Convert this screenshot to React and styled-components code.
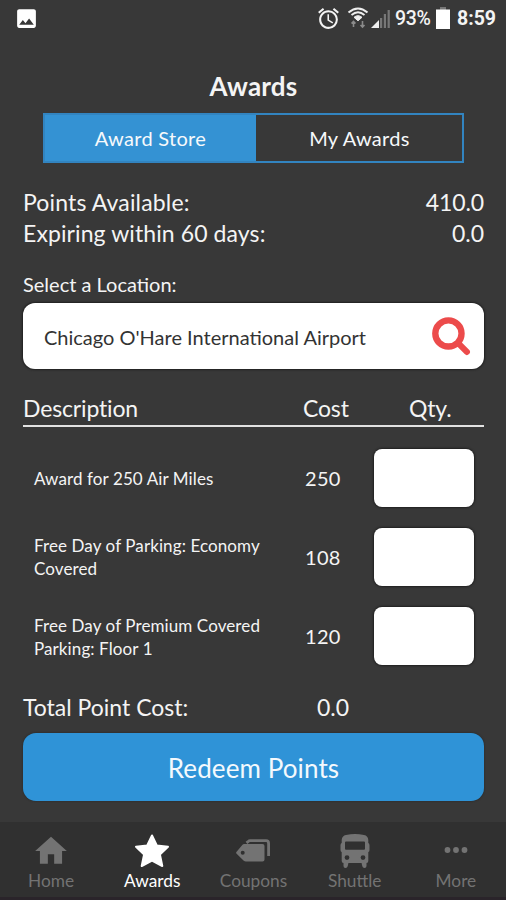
import styled, { createGlobalStyle } from "styled-components";
import { MdAlarm, MdHome, MdImage } from "react-icons/md";

const GlobalStyle = createGlobalStyle`
  * {
    box-sizing: border-box;
  }
  body {
    margin: 0;
    background-color: #383838;
  }
`;

const Screen = styled.div`
  width: 506px;
  height: 900px;
  display: flex;
  flex-direction: column;
  overflow: hidden;
  background-color: #383838;
  color: #f4f4f4;
  font-family: Lato, "Open Sans", sans-serif;
`;

const StatusBar = styled.div`
  height: 38px;
  padding: 0 11px 0 14px;
  display: flex;
  align-items: center;
  flex-shrink: 0;
  font-family: Roboto, sans-serif;

  > svg {
    margin-bottom: 2px;
  }
`;

const StatusIcons = styled.div`
  margin-left: auto;
  display: flex;
  align-items: center;
`;

const StatusIcon = styled.span`
  height: 25px;
  margin-right: ${(props) => props.$gap}px;
  padding-bottom: 2px;
  display: flex;
  align-items: center;
`;

const StatusText = styled.span`
  width: ${(props) => props.$width}px;
  font-size: 19.5px;
  line-height: 38px;
  font-weight: ${(props) => (props.$bold ? 700 : 500)};
  letter-spacing: ${(props) => props.$spacing || 0}px;
  white-space: nowrap;
`;

const Content = styled.main`
  flex: 1;
  padding: 29px 22px 0 23px;
  display: flex;
  flex-direction: column;
`;

const Title = styled.h1`
  margin: 0;
  height: 46px;
  line-height: 38px;
  text-align: center;
  font-size: 26px;
  font-weight: 700;
  letter-spacing: 0.2px;
`;

const Tabs = styled.div`
  margin: 0 20px;
  height: 50px;
  display: grid;
  grid-template-columns: 211px 1fr;
  border: 2px solid #3284c0;
`;

const Tab = styled.button`
  padding: 0 0 0 ${(props) => (props.$active ? 0 : 1)}px;
  border: none;
  background-color: ${(props) => (props.$active ? "#3492d3" : "transparent")};
  color: #f6f9fb;
  font-family: inherit;
  font-size: 20px;
  letter-spacing: 0.3px;
`;

const Summary = styled.div`
  margin-top: 24px;
`;

const SummaryRow = styled.div`
  height: 31px;
  display: flex;
  justify-content: space-between;
  font-size: 23px;
  line-height: 31px;
`;

const SummaryText = styled.span`
  letter-spacing: ${(props) => props.$spacing || 0}px;
`;

const Label = styled.label`
  margin-top: 23px;
  height: 31px;
  font-size: 20px;
  line-height: 25px;
`;

const SearchBox = styled.div`
  height: 66px;
  padding: 0 12px 0 21px;
  display: flex;
  align-items: center;
  justify-content: space-between;
  border-radius: 12px;
  background-color: #fff;
  color: #333;
  font-size: 20px;
  line-height: 26px;
  box-shadow: 0 0 2px 1px #202020;

  span {
    padding-top: 2px;
  }
`;

const TableHead = styled.div`
  margin-top: 22px;
  height: 36px;
  display: grid;
  grid-template-columns: 280px 106px 1fr;
  border-bottom: 2px solid #e2e2e2;
  font-size: 23px;
  line-height: 34px;
  letter-spacing: -0.15px;
`;

const AwardRow = styled.div`
  height: 59px;
  margin-top: ${(props) => (props.$first ? 21 : 20.3)}px;
  padding: 0 10px 0 11px;
  display: grid;
  grid-template-columns: 271px 1fr 100px;
  align-items: center;
`;

const AwardName = styled.span`
  padding-top: 1px;
  font-size: 17px;
  line-height: 23px;
  letter-spacing: 0.1px;
  white-space: pre-line;
`;

const AwardCost = styled.span`
  font-size: 20px;
  letter-spacing: 0.3px;
`;

const QtyInput = styled.input`
  width: 100px;
  height: 58px;
  border: none;
  border-radius: 8px;
  background-color: #fff;
  box-shadow: 0 0 2px 1px #202020;
`;

const Total = styled.div`
  margin-top: 25px;
  height: 42px;
  display: grid;
  grid-template-columns: 294px 1fr;
  font-size: 23px;
  line-height: 33px;
`;

const RedeemBtn = styled.button`
  height: 68px;
  padding: 3px 0 0;
  border: none;
  border-radius: 13px;
  background-color: #2f93d7;
  color: #f4f9fd;
  font-family: inherit;
  font-size: 26px;
  letter-spacing: 0.1px;
  box-shadow: 0 0 2px #222;
`;

const NavBar = styled.nav`
  height: 78px;
  flex-shrink: 0;
  display: grid;
  grid-template-columns: repeat(5, 1fr);
  background-color: #303030;
  border-bottom: 3px solid #2a242a;
`;

const NavItem = styled.a`
  padding: 9px 0 0 1px;
  display: flex;
  flex-direction: column;
  align-items: center;
  color: ${(props) => (props.$active ? "#fff" : "#737373")};
  font-size: 17.3px;
  line-height: 19px;
`;

const NavIcon = styled.span`
  height: 40px;
  display: flex;
  align-items: center;
`;

const WifiIcon = () => (
  <svg width="22" height="22" viewBox="0 0 22 22" fill="none" stroke="#eee">
    <path d="M1.5 5.5Q11 -2.5 20.5 5.5" strokeWidth="2" />
    <path d="M4.5 8Q11 2.5 17.5 8" strokeWidth="1.8" />
    <path d="M7 10.3Q11 7 15 10.3L11 13.8Z" fill="#eee" strokeWidth="1" />
    <path d="M6.5 20v-5M4.5 16.5l2-2 2 2M15.5 14v6M13.5 18l2 2 2-2" stroke="#8b8b8b" strokeWidth="1.6" />
  </svg>
);

const SignalIcon = () => (
  <svg width="20" height="20" viewBox="0 0 20 20">
    <path d="M0 20L8 12V20Z" fill="#eee" />
    <path d="M9 10h2.2v10H9zM12.8 6H15v14h-2.2zM16.6 2h2.2v18h-2.2z" fill="#777" />
  </svg>
);

const BatteryIcon = () => (
  <svg width="14" height="22" viewBox="0 0 14 22">
    <path d="M4 0h6v3H4z" fill="#777" />
    <path d="M0 2.5h14V22H0z" fill="#fff" />
  </svg>
);

const SearchIcon = () => (
  <svg width="41" height="41" viewBox="0 0 40 40" fill="none" stroke="#ec4b4b">
    <circle cx="17" cy="17" r="12.8" strokeWidth="6.2" />
    <path d="M26.5 26.5L35 35" strokeWidth="6" strokeLinecap="round" />
  </svg>
);

const StarIcon = () => (
  <svg width="36" height="36" viewBox="0 0 36 36">
    <path
      d="M18 2.5L22.8 12.4L34 13.8L25.9 21.4L28.3 33L18 27.6L7.7 33L10.1 21.4L2 13.8L13.2 12.4Z"
      fill="currentColor"
      stroke="currentColor"
      strokeWidth="2"
      strokeLinejoin="round"
    />
  </svg>
);

const TagsIcon = () => (
  <svg width="36" height="24" viewBox="0 0 36 24">
    <path
      d="M9.2 5H27.5Q29.5 5 29.5 7V20.5Q29.5 22.5 27.5 22.5H11Q9.7 22.5 8.5 21.4L1.6 14.8Q.6 13.8 1.6 12.8L7.3 6Q8.1 5 9.2 5ZM7.7 11.8A2 2 0 1 0 7.7 15.8A2 2 0 1 0 7.7 11.8Z"
      fill="currentColor"
      fillRule="evenodd"
    />
    <path
      d="M11.5 3.9L13.5 2.2Q14 1.7 15 1.7H31Q33.6 1.7 33.6 4.5V17"
      fill="none"
      stroke="currentColor"
      strokeWidth="2.8"
    />
  </svg>
);

const BusIcon = () => (
  <svg width="30" height="34" viewBox="0 0 30 34">
    <path
      d="M6 1Q15-1 24 1Q28 1.8 28.3 6V9Q29.7 9.5 29.5 12V16Q29.4 18 28.3 18V27Q28.3 29 26.5 29V32Q26.5 34 24.5 34Q22.5 34 22 31L21.6 29H8.4L8 31Q7.5 34 5.5 34Q3.5 34 3.5 32V29Q1.7 29 1.7 27V18Q.6 18 .5 16V12Q.3 9.5 1.7 9V6Q2 1.8 6 1ZM6 7.4Q5 7.4 5 8.4V14.7Q5 15.7 6 15.7H24Q25 15.7 25 14.7V8.4Q25 7.4 24 7.4ZM7 21.2A2.4 2.4 0 1 0 7 26A2.4 2.4 0 1 0 7 21.2ZM23 21.2A2.4 2.4 0 1 0 23 26A2.4 2.4 0 1 0 23 21.2Z"
      fill="currentColor"
      fillRule="evenodd"
    />
  </svg>
);

const MoreIcon = () => (
  <svg width="24" height="10" viewBox="0 0 24 10" fill="currentColor">
    <circle cx="3.5" cy="4" r="2.9" />
    <circle cx="12" cy="4" r="2.9" />
    <circle cx="20.5" cy="4" r="2.9" />
  </svg>
);

const awards = [
  { name: "Award for 250 Air Miles", cost: 250 },
  { name: "Free Day of Parking: Economy\nCovered", cost: 108 },
  { name: "Free Day of Premium Covered\nParking: Floor 1", cost: 120 },
];

const navItems = [
  { name: "Home", icon: <MdHome size={38} /> },
  { name: "Awards", icon: <StarIcon />, active: true },
  { name: "Coupons", icon: <TagsIcon /> },
  { name: "Shuttle", icon: <BusIcon /> },
  { name: "More", icon: <MoreIcon /> },
];

const App = () => {
  return (
    <>
      <GlobalStyle />
      <Screen>
        <StatusBar>
          <MdImage size={25} color="#fff" />
          <StatusIcons>
            <StatusIcon $gap={6}>
              <MdAlarm size={25} />
            </StatusIcon>
            <StatusIcon $gap={2}>
              <WifiIcon />
            </StatusIcon>
            <StatusIcon $gap={4}>
              <SignalIcon />
            </StatusIcon>
            <StatusText $width={41} $spacing={-0.3}>
              93%
            </StatusText>
            <StatusIcon $gap={7}>
              <BatteryIcon />
            </StatusIcon>
            <StatusText $width={38} $bold>
              8:59
            </StatusText>
          </StatusIcons>
        </StatusBar>
        <Content>
          <Title>Awards</Title>
          <Tabs>
            <Tab $active>Award Store</Tab>
            <Tab>My Awards</Tab>
          </Tabs>
          <Summary>
            <SummaryRow>
              <SummaryText $spacing={0.15}>Points Available:</SummaryText>
              <SummaryText $spacing={-0.1}>410.0</SummaryText>
            </SummaryRow>
            <SummaryRow>
              <SummaryText $spacing={0.1}>Expiring within 60 days:</SummaryText>
              <SummaryText>0.0</SummaryText>
            </SummaryRow>
          </Summary>
          <Label>Select a Location:</Label>
          <SearchBox>
            <span>Chicago O'Hare International Airport</span>
            <SearchIcon />
          </SearchBox>
          <TableHead>
            <span>Description</span>
            <span>Cost</span>
            <span>Qty.</span>
          </TableHead>
          {awards.map((award, index) => (
            <AwardRow key={award.name} $first={index === 0}>
              <AwardName>{award.name}</AwardName>
              <AwardCost>{award.cost}</AwardCost>
              <QtyInput />
            </AwardRow>
          ))}
          <Total>
            <span>Total Point Cost:</span>
            <span>0.0</span>
          </Total>
          <RedeemBtn>Redeem Points</RedeemBtn>
        </Content>
        <NavBar>
          {navItems.map((item) => (
            <NavItem key={item.name} $active={item.active}>
              <NavIcon>{item.icon}</NavIcon>
              {item.name}
            </NavItem>
          ))}
        </NavBar>
      </Screen>
    </>
  );
};

export default App;
